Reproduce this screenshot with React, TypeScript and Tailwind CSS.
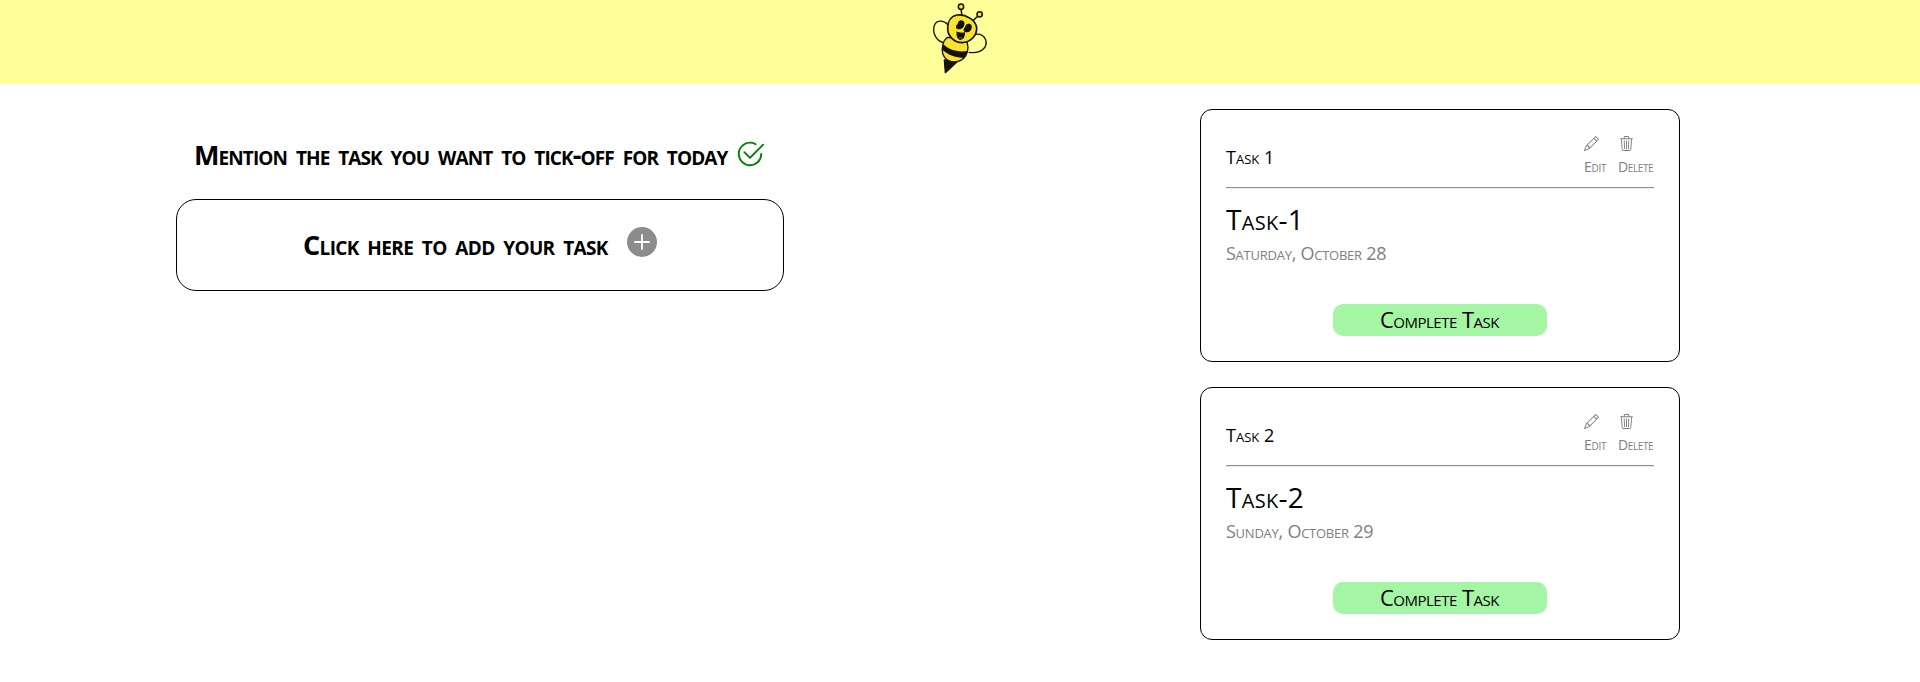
import { BsCheck2Circle, BsPencil, BsTrash3 } from "react-icons/bs";

type Task = { label: string; title: string; date: string };

const tasks: Task[] = [
  { label: "Task 1", title: "Task-1", date: "Saturday, October 28" },
  { label: "Task 2", title: "Task-2", date: "Sunday, October 29" },
];

function Bee() {
  return (
    <svg viewBox="0 0 240 252" className="h-[84px] w-20" fill="none" stroke="#15120c" strokeWidth="4">
      <path d="M84 74C68 58 47 60 42 80C37 103 52 125 72 128" />
      <path d="M142 117C158 98 187 96 197 119C204 142 184 162 146 157" />
      <path d="M126 47L123 28M160 61L174 48" strokeWidth="4.5" />
      <circle cx="123" cy="20" r="8" fill="#f9e42c" strokeWidth="4.5" />
      <circle cx="179" cy="43" r="8" fill="#f9e42c" strokeWidth="4.5" />
      <path d="M73 180L76 218L113 184Z" fill="#15120c" strokeLinejoin="round" />
      <path d="M82 112C69 122 64 142 68 160C74 181 94 189 114 184C133 180 144 163 144 142L140 118Z" fill="#f9e42c" />
      <path d="M70 133C87 149 111 158 143 153C141 163 138 168 132 174C108 173 84 165 68 150Z" fill="#15120c" stroke="none" />
      <path d="M112 45C138 42 167 60 170 83C171 107 152 127 126 128C101 127 82 107 83 84C83 64 93 48 112 45Z" fill="#f9e42c" strokeWidth="5" />
      <g fill="#15120c" stroke="none">
        <ellipse cx="123" cy="73" rx="10" ry="12" transform="rotate(15 123 73)" />
        <ellipse cx="117" cy="80" rx="9" ry="8" />
        <ellipse cx="145" cy="83" rx="10" ry="12" transform="rotate(15 145 83)" />
        <ellipse cx="140" cy="89" rx="9" ry="8" />
        <path d="M110 94C118 99 127 99 135 97C136 110 130 120 120 120C111 117 108 106 110 94Z" />
      </g>
      <path d="M116 115Q121 111 126 115" stroke="#a8941c" strokeWidth="2" />
    </svg>
  );
}

function AddIcon() {
  return (
    <svg viewBox="0 0 30 30" className="mb-1.5 size-[30px]">
      <circle cx="15" cy="15" r="15" fill="#8c8c8c" />
      <path d="M15 8V22M8 15H22" stroke="#ffffff" strokeWidth="1.8" strokeLinecap="round" />
    </svg>
  );
}

function TaskCard({ label, title, date }: Task) {
  return (
    <article className="flex h-[253px] flex-col rounded-[12px] border border-black px-[25px] pt-[25px]">
      <div className="flex h-[52px] justify-between">
        <p className="mt-2.5 text-[18px] leading-6">{label}</p>
        <div className="flex gap-[13px] pt-px text-[14px] leading-[18px] text-[#808080]">
          <button className="flex w-[22px] flex-col items-start gap-[7px]">
            <BsPencil size={15} />
            <span className="tracking-[-0.3px]">Edit</span>
          </button>
          <button className="flex w-[35px] flex-col items-start gap-[7px]">
            <BsTrash3 size={15} />
            <span className="-ml-px tracking-[-0.4px]">Delete</span>
          </button>
        </div>
      </div>
      <hr className="h-0.5 border-t border-b border-t-[#8f8f8f] border-b-[#eeeeee]" />
      <h2 className="mt-3 text-[28px] leading-9 tracking-[0.3px]">{title}</h2>
      <p className="mt-1 text-[18px] leading-6 tracking-[-0.25px] text-[#808080]">{date}</p>
      <button className="mt-[39px] h-8 w-[214px] self-center rounded-[10px] bg-[#a4f6a4] pr-px pb-0.5 text-[22px] leading-[30px] tracking-[-0.5px]">
        Complete Task
      </button>
    </article>
  );
}

export default function App() {
  return (
    <div className="min-h-[682px] bg-white font-['Open_Sans',sans-serif] text-black [font-variant-caps:small-caps]">
      <header className="flex h-[84px] justify-center bg-[#ffff99]">
        <Bee />
      </header>
      <main className="flex justify-between pr-60 pl-44">
        <section className="w-[608px] pt-[52px]">
          <h1 className="flex h-9 items-center gap-1 pl-[18px] text-[27px] leading-9 font-bold whitespace-nowrap">
            <span className="w-[537px] pt-px tracking-[-0.9px] [word-spacing:2.7px]">
              Mention the task you want to tick-off for today
            </span>
            <BsCheck2Circle size={30} className="shrink-0 text-[#008000]" />
          </h1>
          <button className="mt-[27px] flex h-[92px] w-full items-center rounded-[20px] border border-black pl-[126px] text-[27px] leading-9 font-bold whitespace-nowrap">
            <span className="w-[324px] text-left tracking-[-0.65px] [word-spacing:2.3px]">
              Click here to add your task
            </span>
            <AddIcon />
          </button>
        </section>
        <section className="flex w-[480px] flex-col gap-[25px] pt-[25px]">
          {tasks.map((task) => (
            <TaskCard key={task.label} {...task} />
          ))}
        </section>
      </main>
    </div>
  );
}
